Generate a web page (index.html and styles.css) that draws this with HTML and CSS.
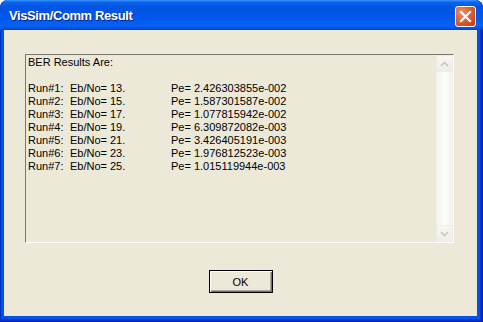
FILE: index.html
```html
<!DOCTYPE html>
<html lang="en">
<head>
    <meta charset="UTF-8">
    <title>VisSim/Comm Result</title>
    <link rel="stylesheet" href="styles.css">
</head>
<body>
    <div class="window">
        <div class="titlebar">
            <span class="title">VisSim/Comm Result</span>
            <button class="close-btn" aria-label="Close">
                <svg width="13" height="13" viewBox="0 0 13 13">
                    <path d="M2 2 L11 11 M11 2 L2 11" stroke="#fff" stroke-width="2.2" stroke-linecap="square"/>
                </svg>
            </button>
        </div>
        <div class="client">
            <div class="edit">
                <div class="results">
                    <div class="heading">BER Results Are:</div>
                    <div class="blank"></div>
                    <span>Run#1:</span><span>Eb/No=</span><span>13.</span><span>Pe= 2.426303855e-002</span>
                    <span>Run#2:</span><span>Eb/No=</span><span>15.</span><span>Pe= 1.587301587e-002</span>
                    <span>Run#3:</span><span>Eb/No=</span><span>17.</span><span>Pe= 1.077815942e-002</span>
                    <span>Run#4:</span><span>Eb/No=</span><span>19.</span><span>Pe= 6.309872082e-003</span>
                    <span>Run#5:</span><span>Eb/No=</span><span>21.</span><span>Pe= 3.426405191e-003</span>
                    <span>Run#6:</span><span>Eb/No=</span><span>23.</span><span>Pe= 1.976812523e-003</span>
                    <span>Run#7:</span><span>Eb/No=</span><span>25.</span><span>Pe= 1.015119944e-003</span>
                </div>
                <div class="scrollbar">
                    <div class="scroll-btn">
                        <svg width="9" height="6" viewBox="0 0 9 6"><path d="M1 5 L4.5 1.5 L8 5" fill="none" stroke="#c9c7ba" stroke-width="1.6"/></svg>
                    </div>
                    <div class="scroll-track"></div>
                    <div class="scroll-btn">
                        <svg width="9" height="6" viewBox="0 0 9 6"><path d="M1 1 L4.5 4.5 L8 1" fill="none" stroke="#c9c7ba" stroke-width="1.6"/></svg>
                    </div>
                </div>
            </div>
            <div class="actions">
                <button class="ok-btn">OK</button>
            </div>
        </div>
    </div>
</body>
</html>
```

FILE: styles.css
```css
html, body {
    margin: 0;
    padding: 0;
    background: #ffffff;
}
body {
    width: 483px;
    height: 322px;
    overflow: hidden;
    font-family: "Liberation Sans", Arial, sans-serif;
    font-size: 11px;
    color: #000;
}
.window {
    width: 483px;
    height: 322px;
    box-sizing: border-box;
    display: flex;
    flex-direction: column;
    background: #0055e5;
    border-radius: 8px 8px 0 0;
    padding: 0 6px 6px 4px;
    box-shadow: inset 0 -1px #001f9c, inset -1px 0 #001f9c, inset 0 -3px #0831d9, inset -3px 0 #0831d9, inset 1px 0 #0033c4;
}
.titlebar {
    height: 30px;
    margin: 0 -6px 0 -4px;
    padding: 0 7px 0 9px;
    display: flex;
    align-items: center;
    justify-content: space-between;
    border-radius: 8px 8px 0 0;
    background: linear-gradient(to bottom, #3d95ff 0%, #0a62ec 8%, #0054e3 25%, #0058ea 60%, #0662f3 85%, #0050df 95%, #0041c8 100%);
}
.title {
    color: #fff;
    font-family: "Liberation Sans", Arial, sans-serif;
    font-weight: bold;
    font-size: 13px;
    letter-spacing: -0.4px;
    text-shadow: 1px 1px #0a1e80;
    padding-top: 1px;
}
.close-btn {
    width: 21px;
    height: 21px;
    padding: 0;
    margin-top: 3px;
    border: 1px solid #fff;
    border-radius: 3px;
    background: radial-gradient(circle at 30% 30%, #f0906a 0%, #e2683f 35%, #cf4a22 75%, #b8391a 100%);
    display: flex;
    align-items: center;
    justify-content: center;
}
.client {
    flex: 1;
    background: #ece9d8;
    padding: 24px 23px 0 21px;
    display: flex;
    flex-direction: column;
}
.edit {
    height: 189px;
    box-sizing: border-box;
    display: flex;
    border-top: 1px solid #7a7869;
    border-left: 1px solid #7a7869;
    border-bottom: 1px solid #ffffff;
    border-right: 1px solid #ffffff;
}
.results {
    flex: 1;
    padding: 1px 0 0 2px;
    display: grid;
    grid-template-columns: 42px 40px 61px 1fr;
    grid-auto-rows: 13px;
    line-height: 13px;
    align-content: start;
    white-space: pre;
}
.heading,
.blank {
    grid-column: 1 / -1;
}
.scrollbar {
    width: 17px;
    display: flex;
    flex-direction: column;
}
.scroll-btn {
    height: 17px;
    box-sizing: border-box;
    border: 1px solid #eeede5;
    border-radius: 2px;
    background: linear-gradient(to bottom, #f7f6f1, #eeede6);
    display: flex;
    align-items: center;
    justify-content: center;
}
.scroll-track {
    flex: 1;
    background: linear-gradient(to right, #f3f1ec, #fdfdfb 50%, #f3f1ec);
}
.actions {
    display: flex;
    justify-content: center;
    padding-top: 27px;
    padding-left: 2px;
}
.ok-btn {
    width: 64px;
    height: 23px;
    padding: 0;
    font-family: "Liberation Sans", Arial, sans-serif;
    font-size: 11px;
    color: #000;
    background: #ece9d8;
    border: 1px solid #000;
    box-shadow: inset 1px 1px #fff, inset -1px -1px #716f64, inset -2px -2px #aca899;
}
```
